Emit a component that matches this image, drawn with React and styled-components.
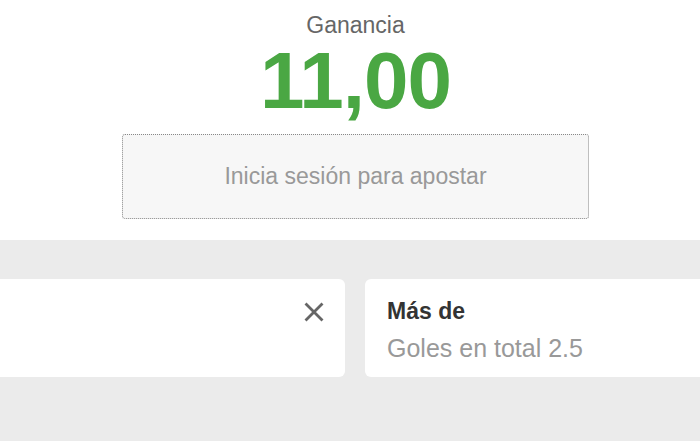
import React from "react";
import styled, { createGlobalStyle } from "styled-components";

const GlobalStyle = createGlobalStyle`
  html, body {
    margin: 0;
    padding: 0;
    background: #fff;
    font-family: "Liberation Sans", Arial, sans-serif;
  }
`;

const Page = styled.div`
  width: 700px;
  height: 441px;
  overflow: hidden;
  display: flex;
  flex-direction: column;
`;

const Summary = styled.section`
  height: 240px;
  box-sizing: border-box;
  padding: 14px 0 0 11px;
  display: flex;
  flex-direction: column;
  align-items: center;
  background: #fff;
`;

const Label = styled.div`
  font-size: 23px;
  line-height: 22px;
  color: #666;
`;

const Amount = styled.div`
  font-size: 80px;
  line-height: 90px;
  font-weight: 700;
  letter-spacing: -1px;
  color: #4aa743;
`;

const LoginBox = styled.div`
  width: 467px;
  height: 85px;
  box-sizing: border-box;
  margin-top: 8px;
  border: 1px dotted #888;
  border-radius: 3px;
  background: #f7f7f7;
  display: flex;
  align-items: center;
  justify-content: center;
  font-size: 23px;
  color: #999;
`;

const Slip = styled.section`
  flex: 1;
  background: #ebebeb;
  padding-top: 39px;
  overflow: hidden;
`;

const Track = styled.div`
  display: flex;
  gap: 20px;
  margin-left: -55px;
`;

const Card = styled.div`
  flex: 0 0 400px;
  height: 98px;
  box-sizing: border-box;
  background: #fff;
  border-radius: 6px;
  padding: 19px 21px 0 22px;
  display: flex;
  justify-content: ${(p) => (p.$closable ? "flex-end" : "flex-start")};
  align-items: flex-start;
`;

const CloseButton = styled.button`
  border: 0;
  background: none;
  padding: 0;
  margin-top: 4px;
  width: 20px;
  height: 20px;
  cursor: pointer;
  color: #666;
`;

const Selection = styled.div`
  display: flex;
  flex-direction: column;
`;

const Pick = styled.div`
  font-size: 23px;
  line-height: 26px;
  font-weight: 700;
  color: #333;
`;

const Market = styled.div`
  font-size: 25px;
  line-height: 28px;
  color: #999;
  margin-top: 10px;
`;

const CloseIcon = () => (
  <svg width="20" height="20" viewBox="0 0 20 20">
    <path
      d="M2.5 2.5 L17.5 17.5 M17.5 2.5 L2.5 17.5"
      stroke="currentColor"
      strokeWidth="2.8"
      strokeLinecap="square"
      fill="none"
    />
  </svg>
);

export default function App() {
  return (
    <>
      <GlobalStyle />
      <Page>
        <Summary>
          <Label>Ganancia</Label>
          <Amount>11,00</Amount>
          <LoginBox>Inicia sesión para apostar</LoginBox>
        </Summary>
        <Slip>
          <Track>
            <Card $closable>
              <CloseButton aria-label="Cerrar">
                <CloseIcon />
              </CloseButton>
            </Card>
            <Card>
              <Selection>
                <Pick>Más de</Pick>
                <Market>Goles en total 2.5</Market>
              </Selection>
            </Card>
          </Track>
        </Slip>
      </Page>
    </>
  );
}
